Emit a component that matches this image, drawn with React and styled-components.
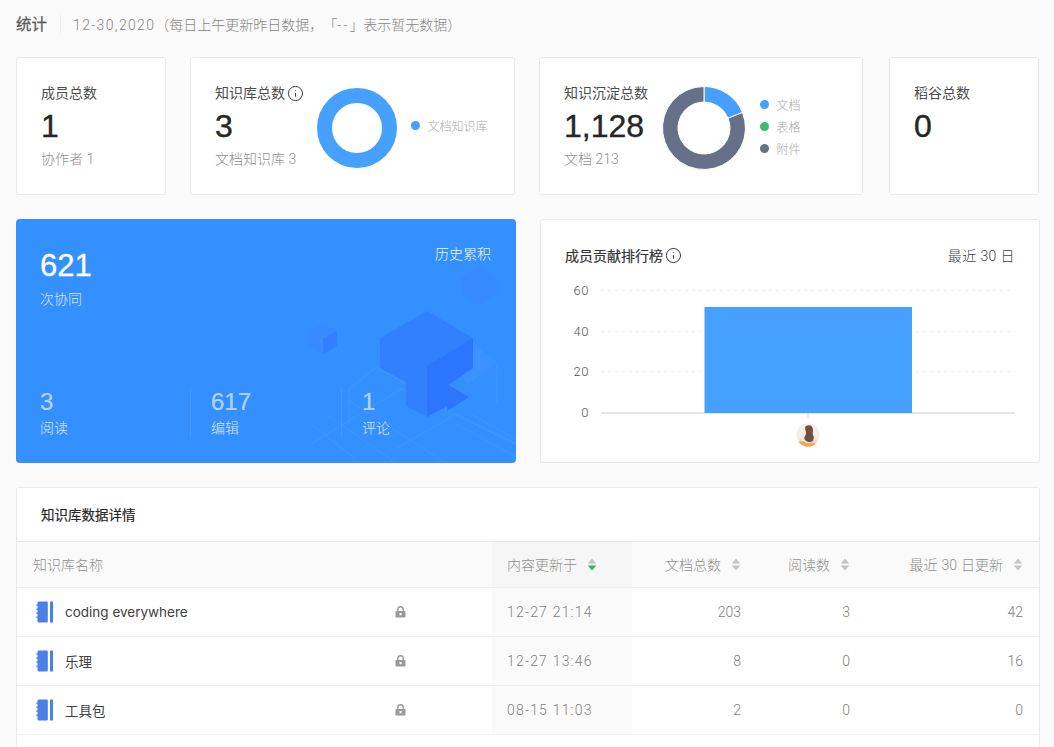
import React from "react";
import styled, { createGlobalStyle } from "styled-components";
import { Info } from "lucide-react";

const LIGHT = `Roboto, "Noto Sans CJK SC", sans-serif`;

const Global = createGlobalStyle`
  html, body { margin: 0; padding: 0; height: 747px; overflow: hidden; background: #fafafa; }
  * { box-sizing: border-box; }
  body { font-family: "Liberation Sans", "Noto Sans CJK SC", sans-serif; text-spacing-trim: space-all; }
`;

const Page = styled.div`
  width: 1054px;
  height: 747px;
  overflow: hidden;
  padding: 0 14px 0 16px;
  display: flex;
  flex-direction: column;
  background: #fafafa;
`;
const Header = styled.header`
  height: 57px;
  padding-bottom: 10px;
  display: flex;
  align-items: center;
  flex: none;
`;
const PageTitle = styled.h1`
  margin: 0;
  padding-bottom: 1px;
  font-size: 15.5px;
  font-weight: 400;
  color: #595959;
  -webkit-text-stroke: 0.25px #595959;
`;
const HeaderRule = styled.span`
  width: 1px;
  height: 18px;
  background: #ececec;
  margin: 0 12px 0 13px;
`;
const HeaderNote = styled.span`
  font-family: ${LIGHT};
  font-size: 14px;
  font-weight: 300;
  color: #858585;
  white-space: nowrap;
`;
const NoteDate = styled.span`
  letter-spacing: 1.35px;
`;
const NoteDash = styled.span`
  letter-spacing: 2px;
`;
const StatsRow = styled.section`
  display: flex;
  gap: 24px;
  flex: none;
`;
const Card = styled.div`
  background: #fff;
  border: 1px solid #eaeaea;
  border-radius: 3px;
  height: 138px;
  width: ${(p) => p.$w}px;
  margin-left: ${(p) => p.$ml || 0}px;
  padding: 24px 0 0 24px;
  display: flex;
  flex: none;
`;
const StatText = styled.div`
  width: ${(p) => p.$w || 100}px;
  flex: none;
`;
const StatTitle = styled.div`
  height: 22px;
  line-height: 22px;
  font-size: 14px;
  color: #4d4d4d;
  display: flex;
  align-items: center;
  gap: 2px;
  white-space: nowrap;
`;
const StatValue = styled.div`
  margin-top: 2px;
  height: 40px;
  line-height: 40px;
  font-size: 32px;
  font-weight: 400;
  color: #262626;
  -webkit-text-stroke: 0.4px #262626;
`;
const StatSub = styled.div`
  margin-top: 2px;
  height: 22px;
  line-height: 22px;
  font-family: ${LIGHT};
  font-size: 14px;
  font-weight: 300;
  color: #8f8f8f;
  white-space: nowrap;
`;
const DonutBox = styled.svg`
  flex: none;
  display: block;
  margin-top: ${(p) => p.$mt}px;
`;
const Legend = styled.ul`
  list-style: none;
  margin: ${(p) => p.$mt}px 0 0 14px;
  padding: 0;
`;
const LegendItem = styled.li`
  height: 22px;
  display: flex;
  align-items: center;
  gap: 7.5px;
  font-size: 12px;
  font-weight: 300;
  color: #a8a8a8;
  white-space: nowrap;
`;
const Dot = styled.i`
  width: 9px;
  height: 9px;
  border-radius: 50%;
  background: ${(p) => p.$c};
`;
const MiddleRow = styled.section`
  margin-top: 24px;
  display: flex;
  gap: 24px;
  flex: none;
`;
const BlueCard = styled.div`
  position: relative;
  width: 500px;
  height: 244px;
  overflow: hidden;
  border-radius: 4px;
  background: #3590ff;
  padding: 30px 25px 0 24px;
  color: #fff;
  display: flex;
  flex-direction: column;
`;
const BlueArt = styled.svg`
  position: absolute;
  left: 0;
  top: 0;
  pointer-events: none;
`;
const BlueTop = styled.div`
  position: relative;
  display: flex;
  justify-content: space-between;
  align-items: flex-start;
`;
const BigNum = styled.div`
  font-size: 31px;
  line-height: 34px;
  -webkit-text-stroke: 0.3px #fff;
`;
const BigLabel = styled.div`
  margin-top: 5px;
  font-size: 14px;
  line-height: 22px;
  font-weight: 300;
  color: rgba(255, 255, 255, 0.8);
`;
const HistoryTag = styled.div`
  margin-top: -6px;
  font-size: 14px;
  line-height: 22px;
  font-weight: 300;
  color: rgba(255, 255, 255, 0.95);
`;
const BlueBottom = styled.div`
  position: relative;
  margin-top: auto;
  margin-bottom: 25px;
  display: flex;
`;
const BlueStat = styled.div`
  width: ${(p) => p.$w}px;
  padding-left: ${(p) => (p.$first ? 0 : 20)}px;
  border-left: ${(p) => (p.$first ? "none" : "1px solid rgba(255,255,255,0.07)")};
  height: 50px;
`;
const SmallNum = styled.div`
  font-size: 24px;
  line-height: 28px;
  color: rgba(255, 255, 255, 0.62);
  -webkit-text-stroke: 0.2px rgba(255, 255, 255, 0.62);
`;
const SmallLabel = styled.div`
  font-size: 14px;
  line-height: 22px;
  font-weight: 300;
  margin-top: 1px;
  color: rgba(255, 255, 255, 0.8);
`;
const ChartCard = styled.div`
  width: 500px;
  height: 244px;
  background: #fff;
  border: 1px solid #eaeaea;
  border-radius: 3px;
  padding: 24px 24px 0;
`;
const ChartHead = styled.div`
  display: flex;
  justify-content: space-between;
  align-items: center;
  height: 22px;
`;
const ChartTitle = styled.div`
  display: flex;
  align-items: center;
  gap: 2px;
  font-size: 14px;
  font-weight: 400;
  color: #333;
  -webkit-text-stroke: 0.2px #333;
`;
const ChartRange = styled.div`
  font-family: ${LIGHT};
  font-size: 14px;
  font-weight: 300;
  color: #404040;
  letter-spacing: 0.4px;
`;
const ChartSvg = styled.svg`
  display: block;
  margin-top: 14px;
`;
const AxisText = styled.text`
  font-family: Roboto, sans-serif;
  font-weight: 300;
  font-size: 13px;
  fill: #555;
  letter-spacing: 0.5px;
`;
const TableCard = styled.section`
  margin-top: 24px;
  background: #fff;
  border: 1px solid #eaeaea;
  border-radius: 3px;
  flex: none;
  height: 300px;
`;
const TableTitle = styled.h2`
  margin: 0;
  height: 54px;
  line-height: 55px;
  padding-left: 24px;
  font-size: 13.5px;
  font-weight: 400;
  color: #262626;
  -webkit-text-stroke: 0.2px #262626;
  border-bottom: 1px solid #e8e8e8;
`;
const Table = styled.div`
  display: grid;
  grid-template-columns: 475px 140px 125px 109px 173px;
`;
const HeadCell = styled.div`
  height: 45px;
  display: flex;
  align-items: center;
  gap: 10px;
  justify-content: ${(p) => (p.$right ? "flex-end" : "flex-start")};
  padding: ${(p) => (p.$sorted ? "0 0 1px 15px" : "0 16px 1px")};
  background: ${(p) => (p.$sorted ? "#f6f6f6" : "#fafafa")};
  font-family: ${LIGHT};
  font-size: 14px;
  font-weight: 300;
  word-spacing: 0.6px;
  color: #8f8f8f;
  white-space: nowrap;
`;
const Cell = styled.div`
  height: 49px;
  border-top: 1px solid #efefef;
  display: flex;
  align-items: center;
  justify-content: ${(p) => (p.$right ? "flex-end" : "flex-start")};
  padding: ${(p) => (p.$sorted ? "0 0 0 15px" : "0 16px")};
  background: ${(p) => (p.$sorted ? "#fafafa" : "#fff")};
  font-family: ${LIGHT};
  font-size: 14px;
  font-weight: 300;
  color: #808080;
`;
const RowEnd = styled.div`
  grid-column: 1 / -1;
  border-top: 1px solid #efefef;
`;
const DateText = styled.span`
  letter-spacing: 1.2px;
`;
const NameWrap = styled.div`
  display: flex;
  align-items: center;
  width: 100%;
  padding-left: 3px;
`;
const RepoName = styled.span`
  margin-left: 11px;
  width: 330px;
  padding-bottom: 1px;
  font-family: Inter, "Noto Sans CJK SC", sans-serif;
  font-size: 13.5px;
  font-weight: 400;
  color: #404040;
`;

const polar = (cx, cy, r, deg) => {
  const a = ((deg - 90) * Math.PI) / 180;
  return [cx + r * Math.cos(a), cy + r * Math.sin(a)];
};
const arc = (cx, cy, ro, ri, from, to) => {
  const [a, b] = polar(cx, cy, ro, from);
  const [c, d] = polar(cx, cy, ro, to);
  const [e, f] = polar(cx, cy, ri, to);
  const [g, h] = polar(cx, cy, ri, from);
  const large = to - from > 180 ? 1 : 0;
  return `M${a} ${b}A${ro} ${ro} 0 ${large} 1 ${c} ${d}L${e} ${f}A${ri} ${ri} 0 ${large} 0 ${g} ${h}Z`;
};

const InfoIcon = () => <Info size={17} strokeWidth={1.35} color="#333" />;

const Sort = ({ active }) => (
  <svg width="10" height="13" viewBox="0 0 10 13" style={{ flex: "none" }}>
    <path d="M5 0.5 9.2 5.5H.8Z" fill="#c4c4c4" />
    <path d="M5 12.5 9.2 7.5H.8Z" fill={active ? "#25b864" : "#c4c4c4"} />
  </svg>
);

const Book = () => (
  <svg width="18" height="22" viewBox="0 0 18 22" style={{ flex: "none" }}>
    <path d="M3 0.5h7.6c.8 0 1.2.4 1.2 1.2v18.6c0 .8-.4 1.2-1.2 1.2H3c-1 0-1.5-.5-1.5-1.5V2C1.500 1 2 .5 3 .5Z" fill="#4a80e8" />
    <rect x="14" y="0.5" width="3" height="21" rx="0.6" fill="#4a80e8" />
    <g fill="#4a80e8">
      <rect x="0" y="3.500" width="2.500" height="1.200" rx="0.6" />
      <rect x="0" y="7.500" width="2.500" height="1.200" rx="0.6" />
      <rect x="0" y="11.500" width="2.500" height="1.200" rx="0.6" />
      <rect x="0" y="15.500" width="2.500" height="1.200" rx="0.6" />
    </g>
  </svg>
);

const Lock = () => (
  <svg width="11" height="12" viewBox="0 0 11 12" style={{ flex: "none" }}>
    <path d="M2.800 5V3.500a2.700 2.700 0 0 1 5.400 0V5" fill="none" stroke="#9a9a9a" strokeWidth="1.4" />
    <path d="M1.200 5h8.600c.4 0 .7.300.7.700v5.100c0 .4-.3.7-.7.700H1.200c-.4 0-.7-.3-.7-.7V5.700c0-.4.3-.7.7-.7Z" fill="#9a9a9a" />
    <rect x="4.500" y="7" width="2" height="2.200" rx="0.5" fill="#fff" />
  </svg>
);

const rows = [
  ["coding everywhere", "12-27 21:14", 203, 3, 42],
  ["乐理", "12-27 13:46", 8, 0, 16],
  ["工具包", "08-15 11:03", 2, 0, 0],
];

const BlueIllustration = () => (
  <BlueArt width="500" height="244" viewBox="0 0 500 244">
    <g fill="none" stroke="#5ea5ff" strokeOpacity="0.28" strokeWidth="1">
      <path d="M295 225 385 170 500 225" />
      <path d="M333 170 360 148 390 165M333 170V205M433 140 457 125 481 145V185M433 140V195" />
      <path d="M295 205 340 240M310 195 380 244M330 180 430 244" />
      <path d="M380 230 440 195 500 225" />
      <path d="M440 205 500 238M455 195 500 220" />
    </g>
    <path d="M433 142 457 126 480 145 452 165Z" fill="#4c9dff" fillOpacity="0.3" />
    <path d="M292 112 307 104 321 112 321 127 307 135 292 127Z" fill="#378bff" />
    <path d="M307 120 321 112V127L307 135Z" fill="#327fff" />
    <path d="M445 58 463 48 481 58V76L463 86 445 76Z" fill="#378bff" />
    <path d="M411 92 364 119V149L390 163V187L411 198 431 187V167L457 149V119Z" fill="#3180ff" />
    <path d="M411 147 457 119V149L431 167V187L411 198Z" fill="#2c76ff" />
    <path d="M431 165 453 178 431 192Z" fill="#2c76fb" />
  </BlueArt>
);

const Avatar = () => (
  <g>
    <defs>
      <clipPath id="avatarClip"><circle cx="243" cy="155" r="11.5" /></clipPath>
      <linearGradient id="avatarBg" x1="0" y1="0" x2="0" y2="1">
        <stop offset="0" stopColor="#f4eeea" />
        <stop offset="0.65" stopColor="#f3ebe5" />
        <stop offset="1" stopColor="#eebd82" />
      </linearGradient>
      <filter id="avatarBlur"><feGaussianBlur stdDeviation="0.6" /></filter>
    </defs>
    <g clipPath="url(#avatarClip)">
      <rect x="231" y="143" width="24" height="24" fill="url(#avatarBg)" />
      <g filter="url(#avatarBlur)">
        <path d="M241 146c4-2 7 0 7 4 0 3-1 4 1 7l-1 4c-3 2-6 1-8-1-2-3 1-4 1-7s-2-5 0-7Z" fill="#6e4f47" />
        <path d="M233 162c3-1 6-1 8 1l8 0 6 5h-22Z" fill="#eda75a" />
      </g>
    </g>
  </g>
);

const ContributionChart = () => (
  <ChartSvg width="450" height="170" viewBox="0 0 450 170">
    <g>
      <AxisText x="24" y="15" textAnchor="end">60</AxisText>
      <AxisText x="24" y="56" textAnchor="end">40</AxisText>
      <AxisText x="24" y="96" textAnchor="end">20</AxisText>
      <AxisText x="24" y="137" textAnchor="end">0</AxisText>
    </g>
    <g stroke="#ececec" strokeDasharray="3 4" strokeWidth="1">
      <path d="M36 10.500H450" />
      <path d="M36 51.500H450" />
      <path d="M36 91.500H450" />
    </g>
    <path d="M36 133H450" stroke="#dcdcdc" strokeWidth="1.500" />
    <path d="M243 133v5" stroke="#d9d9d9" strokeWidth="1" />
    <rect x="139.500" y="27" width="207.500" height="106" fill="#46a0ff" />
    <Avatar />
  </ChartSvg>
);

export default function App() {
  return (
    <>
      <Global />
      <Page>
        <Header>
          <PageTitle>统计</PageTitle>
          <HeaderRule />
          <HeaderNote><NoteDate>12-30,2020</NoteDate>（每日上午更新昨日数据，「<NoteDash>--</NoteDash>」表示暂无数据）</HeaderNote>
        </Header>

        <StatsRow>
          <Card $w={150}>
            <StatText>
              <StatTitle>成员总数</StatTitle>
              <StatValue>1</StatValue>
              <StatSub>协作者 1</StatSub>
            </StatText>
          </Card>
          <Card $w={325}>
            <StatText $w={102}>
              <StatTitle>知识库总数<InfoIcon /></StatTitle>
              <StatValue>3</StatValue>
              <StatSub>文档知识库 3</StatSub>
            </StatText>
            <DonutBox $mt={6} width="80" height="80" viewBox="0 0 80 80">
              <circle cx="40" cy="40" r="32.500" fill="none" stroke="#46a0ff" strokeWidth="15" />
            </DonutBox>
            <Legend $mt={32}>
              <LegendItem><Dot $c="#46a0ff" />文档知识库</LegendItem>
            </Legend>
          </Card>
          <Card $w={324}>
            <StatText $w={98}>
              <StatTitle>知识沉淀总数</StatTitle>
              <StatValue>1,128</StatValue>
              <StatSub>文档 213</StatSub>
            </StatText>
            <DonutBox $mt={4} width="84" height="84" viewBox="0 0 84 84">
              <path d={arc(42, 42, 41.5, 26, 0, 68)} fill="#46a0ff" stroke="#fff" strokeWidth="1" />
              <path d={arc(42, 42, 41.5, 26, 68, 360)} fill="#667089" stroke="#fff" strokeWidth="1" />
            </DonutBox>
            <Legend $mt={11}>
              <LegendItem><Dot $c="#46a0ff" />文档</LegendItem>
              <LegendItem><Dot $c="#3fbb73" />表格</LegendItem>
              <LegendItem><Dot $c="#667089" />附件</LegendItem>
            </Legend>
          </Card>
          <Card $w={150} $ml={2}>
            <StatText>
              <StatTitle>稻谷总数</StatTitle>
              <StatValue>0</StatValue>
            </StatText>
          </Card>
        </StatsRow>

        <MiddleRow>
          <BlueCard>
            <BlueIllustration />
            <BlueTop>
              <div>
                <BigNum>621</BigNum>
                <BigLabel>次协同</BigLabel>
              </div>
              <HistoryTag>历史累积</HistoryTag>
            </BlueTop>
            <BlueBottom>
              <BlueStat $first $w={150}>
                <SmallNum>3</SmallNum>
                <SmallLabel>阅读</SmallLabel>
              </BlueStat>
              <BlueStat $w={151}>
                <SmallNum>617</SmallNum>
                <SmallLabel>编辑</SmallLabel>
              </BlueStat>
              <BlueStat $w={120}>
                <SmallNum>1</SmallNum>
                <SmallLabel>评论</SmallLabel>
              </BlueStat>
            </BlueBottom>
          </BlueCard>
          <ChartCard>
            <ChartHead>
              <ChartTitle>成员贡献排行榜<InfoIcon /></ChartTitle>
              <ChartRange>最近 30 日</ChartRange>
            </ChartHead>
            <ContributionChart />
          </ChartCard>
        </MiddleRow>

        <TableCard>
          <TableTitle>知识库数据详情</TableTitle>
          <Table>
            <HeadCell>知识库名称</HeadCell>
            <HeadCell $sorted>内容更新于 <Sort active /></HeadCell>
            <HeadCell $right>文档总数 <Sort /></HeadCell>
            <HeadCell $right>阅读数 <Sort /></HeadCell>
            <HeadCell $right>最近 30 日更新 <Sort /></HeadCell>
            {rows.map(([name, date, docs, reads, recent]) => (
              <React.Fragment key={name}>
                <Cell>
                  <NameWrap>
                    <Book />
                    <RepoName>{name}</RepoName>
                    <Lock />
                  </NameWrap>
                </Cell>
                <Cell $sorted><DateText>{date}</DateText></Cell>
                <Cell $right>{docs}</Cell>
                <Cell $right>{reads}</Cell>
                <Cell $right>{recent}</Cell>
              </React.Fragment>
            ))}
            <RowEnd />
          </Table>
        </TableCard>
      </Page>
    </>
  );
}
